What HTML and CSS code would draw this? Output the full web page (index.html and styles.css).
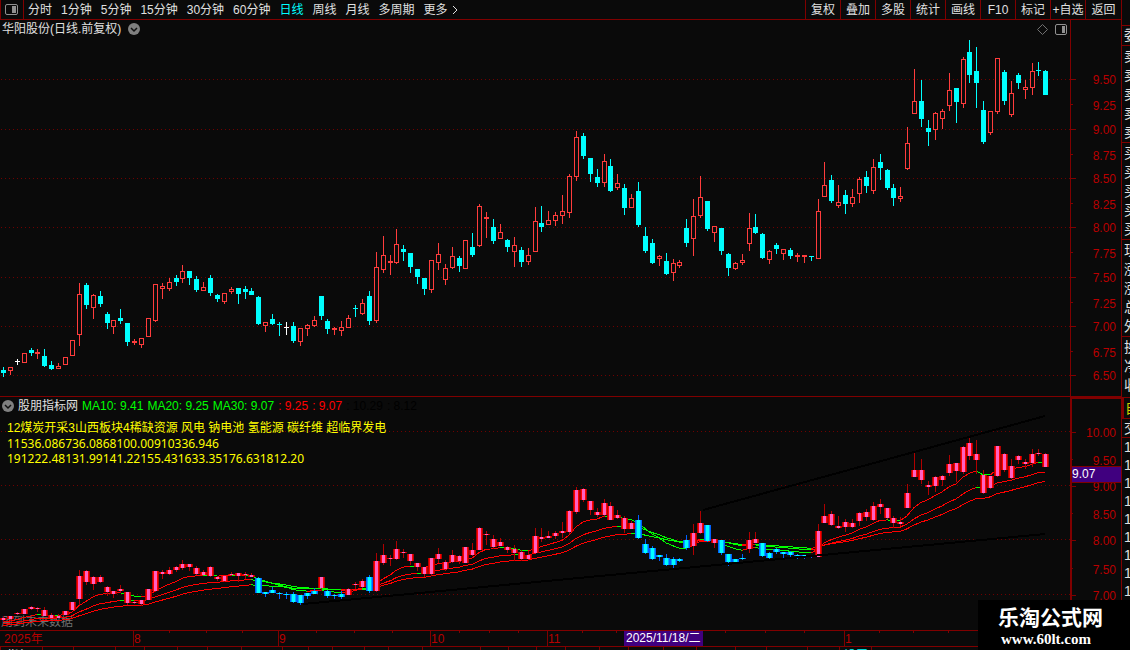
FILE: index.html
```html
<!DOCTYPE html>
<html lang="zh-CN">
<head>
    <meta charset="UTF-8">
    <meta name="viewport" content="width=device-width, initial-scale=1.0">
    <title>华阳股份 日线</title>
    <link rel="stylesheet" href="styles.css">
</head>
<body>
    <div class="terminal">
        <main class="workspace">
            <header class="toolbar">
                <button type="button" class="panel-toggle" aria-label="侧栏">
                    <svg width="13" height="12" viewBox="0 0 13 12">
                        <rect x="0.5" y="0.5" width="12" height="10" rx="1.5" fill="none" stroke="#909090"/>
                        <rect x="7" y="2" width="4" height="7" fill="#909090"/>
                    </svg>
                </button>
                <nav class="periods">
                    <button type="button">分时</button>
                    <button type="button">1分钟</button>
                    <button type="button">5分钟</button>
                    <button type="button">15分钟</button>
                    <button type="button">30分钟</button>
                    <button type="button">60分钟</button>
                    <button type="button" class="active">日线</button>
                    <button type="button">周线</button>
                    <button type="button">月线</button>
                    <button type="button">多周期</button>
                    <button type="button" class="more">更多
                        <svg width="6" height="10" viewBox="0 0 6 10"><path d="M1 1L5 5L1 9" fill="none" stroke="#e0e0e0"/></svg>
                    </button>
                </nav>
                <div class="tools">
                    <button type="button">复权</button>
                    <button type="button">叠加</button>
                    <button type="button">多股</button>
                    <button type="button">统计</button>
                    <button type="button">画线</button>
                    <button type="button">F10</button>
                    <button type="button">标记</button>
                    <button type="button">+自选</button>
                    <button type="button">返回</button>
                </div>
            </header>

            <section class="panel price-panel">
                <div class="plot">
                    <svg id="priceChart" class="chart"></svg>
                    <div class="plot-head title">
                        <span>华阳股份(日线.前复权)</span>
                        <svg width="12" height="12" viewBox="0 0 12 12">
                            <circle cx="6" cy="6" r="6" fill="#808080"/>
                            <path d="M3 5L6 8L9 5" fill="none" stroke="#111" stroke-width="1.5"/>
                        </svg>
                        <div class="plot-icons">
                            <svg width="11" height="11" viewBox="0 0 11 11"><path d="M5.5 0.5L10.5 5.5L5.5 10.5L0.5 5.5Z" fill="none" stroke="#707070"/></svg>
                            <svg width="12" height="11" viewBox="0 0 12 11">
                                <rect x="0.5" y="0.5" width="11" height="10" rx="1.5" fill="none" stroke="#909090"/>
                                <rect x="7" y="2" width="3" height="7" fill="#909090"/>
                            </svg>
                        </div>
                    </div>
                </div>
                <svg id="priceAxis" class="axis"></svg>
            </section>

            <section class="panel indicator-panel">
                <div class="plot">
                    <svg id="indicatorChart" class="chart"></svg>
                    <div class="plot-head">
                        <svg width="12" height="12" viewBox="0 0 12 12">
                            <circle cx="6" cy="6" r="6" fill="#808080"/>
                            <path d="M3 5L6 8L9 5" fill="none" stroke="#111" stroke-width="1.5"/>
                        </svg>
                        <span>股朋指标网</span>
                        <span class="up">MA10: 9.41</span>
                        <span class="up">MA20: 9.25</span>
                        <span class="up">MA30: 9.07</span>
                        <span class="alert">: 9.25</span>
                        <span class="alert">: 9.07</span>
                        <span class="dim">: 10.29</span>
                        <span class="dim">: 8.12</span>
                    </div>
                    <div class="notes">
                        <p>12煤炭开采3山西板块4稀缺资源 风电 钠电池 氢能源 碳纤维 超临界发电</p>
                        <p class="figures">11536.086736.0868100.00910336.946</p>
                        <p class="figures">191222.48131.99141.22155.431633.35176.631812.20</p>
                    </div>
                </div>
                <svg id="indicatorAxis" class="axis"></svg>
            </section>

            <svg id="timeAxis" class="time-axis"></svg>
            <svg id="tabStrip" class="tab-strip"></svg>
        </main>

        <aside class="quotes">
            <div class="group first"><span>委</span></div>
            <div class="group"><span>卖</span><span>卖</span><span>卖</span><span>卖</span><span>卖</span></div>
            <div class="group"><span>买</span><span>买</span><span>买</span><span>买</span><span>买</span></div>
            <div class="group"><span>现</span><span>涨</span><span>涨</span><span>总</span><span>外</span></div>
            <div class="group"><span>换</span><span>净</span><span>收</span></div>
            <div class="group tab"><span>自</span></div>
            <div class="group ticks-head"><span>交</span></div>
            <div class="group ticks"><span>1</span><span>1</span><span>1</span><span>1</span><span>1</span><span>1</span><span>1</span><span>1</span><span>1</span></div>
        </aside>

        <div class="brand">
            <strong>乐淘公式网</strong>
            <span>www.60lt.com</span>
        </div>
    </div>

    <script src="chart.js"></script>
</body>
</html>
```
FILE: styles.css
```css
* {
    margin: 0;
    padding: 0;
    box-sizing: border-box;
}

body {
    background: #0a0a0a;
    color: #e0e0e0;
    font-family: "Liberation Sans", "Noto Sans CJK SC", sans-serif;
    font-size: 12px;
    line-height: 16px;
    overflow: hidden;
}

button {
    background: none;
    border: none;
    color: inherit;
    font: inherit;
    white-space: nowrap;
    cursor: pointer;
}

svg {
    display: block;
    flex: none;
}

.terminal {
    position: relative;
    display: grid;
    grid-template-columns: minmax(0, 1fr) 9px;
    height: 100vh;
    overflow: hidden;
}

.workspace {
    display: flex;
    flex-direction: column;
    min-width: 0;
}

/* toolbar */
.toolbar {
    display: flex;
    height: 20px;
    flex: none;
    border-bottom: 1px solid #800000;
    border-left: 1px solid #800000;
}

.panel-toggle {
    display: flex;
    align-items: center;
    padding: 0 5px 0 4px;
    border-right: 1px solid #800000;
}

.periods {
    display: flex;
    gap: 9px;
    padding-left: 4px;
    flex: 1;
}

.periods .active {
    color: #00ffff;
}

.more {
    display: flex;
    align-items: center;
    gap: 4px;
}

.tools {
    display: grid;
    grid-template-columns: repeat(8, 35px) 36px;
}

.tools button {
    border-left: 1px solid #800000;
}

/* chart panels */
.panel {
    display: grid;
    grid-template-columns: minmax(0, 1fr) 51px;
    flex: none;
}

.plot {
    position: relative;
}

.chart,
.axis,
.time-axis,
.tab-strip {
    width: 100%;
    overflow: hidden;
    shape-rendering: crispEdges;
}

.price-panel .chart,
.price-panel .axis {
    height: 376px;
}

.price-panel .axis {
    border-left: 1px solid #800000;
}

.indicator-panel {
    border-top: 1px solid #800000;
}

.indicator-panel .chart,
.indicator-panel .axis {
    height: 233px;
}

.indicator-panel .axis {
    border: 2px solid #800000;
    border-width: 2px 0 0 2px;
}

.axis text,
.time-axis text {
    fill: #b80000;
}

.axis text {
    text-anchor: end;
}

.axis .cursor-value,
.time-axis .cursor-value {
    fill: #ffffff;
}

.axis .cursor-value {
    text-anchor: start;
}

.plot-head {
    position: absolute;
    top: 0;
    left: 0;
    right: 0;
    display: flex;
    align-items: center;
    gap: 4px;
    padding: 1px 3px 1px 2px;
    white-space: nowrap;
}

.plot-head.title {
    gap: 7px;
}

.plot-icons {
    display: flex;
    gap: 7px;
    margin-left: auto;
}

.up {
    color: #00ff00;
}

.alert {
    color: #ff0000;
}

.dim {
    color: #000000;
}

.notes {
    position: absolute;
    top: 24px;
    left: 7px;
    color: #ffff00;
    line-height: 15px;
    white-space: nowrap;
}

.figures {
    font-family: "Noto Sans", sans-serif;
}

.time-axis {
    height: 17px;
    border: 1px solid #800000;
    border-width: 1px 0;
}

.tab-strip {
    height: 20px;
}

/* clipped quote column */
.quotes {
    border-left: 1px solid #800000;
    padding-top: 25px;
    overflow: hidden;
    font-size: 14px;
    line-height: 19px;
}

.group {
    display: flex;
    flex-direction: column;
    width: 32px;
    padding: 1px 0 0 2px;
    border-top: 1px solid #800000;
}

.group.first {
    padding-top: 0;
}

.group:nth-child(5) {
    padding-bottom: 2px;
}

.group.tab {
    color: #d0d000;
    border-left: 2px solid #800000;
    padding-left: 1px;
}

.group.ticks-head {
    padding-top: 0;
    line-height: 18px;
}

.group.ticks {
    padding-top: 0;
    line-height: 18px;
}

.brand {
    position: absolute;
    right: 0;
    bottom: 0;
    width: 152px;
    height: 50px;
    padding: 6px 0 0 20px;
    background: #000;
    color: #fff;
}

.brand strong,
.brand span {
    display: block;
}

.brand strong {
    font-size: 21px;
    line-height: 24px;
}

.brand span {
    padding-left: 3px;
    font-family: "Liberation Serif", serif;
    font-size: 15px;
    font-weight: bold;
    line-height: 18px;
}
```
FILE: chart.js
```js
// high, body top, body bottom, low, kind (u = up, d = down, n = unchanged)
const bars = `
367,370,373,377,d 367,367,371,375,u 359,361,362,365,n 353,353,363,363,u 348,350,353,356,d
349,352,354,359,u 349,356,366,367,d 361,365,369,370,d 363,366,369,369,u 357,357,365,365,u
340,340,356,356,u 283,294,335,346,u 283,285,305,309,d 294,295,308,319,u 291,296,304,307,d
312,314,323,329,d 320,320,327,334,u 309,318,321,324,d 323,323,342,346,d 339,341,343,345,u
338,338,345,348,u 318,318,337,337,u 284,284,321,322,u 283,286,289,299,u 278,282,289,291,u
275,278,282,286,d 265,271,279,283,u 271,271,278,285,d 276,279,290,292,d 282,287,291,291,u
275,278,293,296,d 294,295,299,302,d 293,293,302,304,u 287,289,292,294,u 288,288,294,304,d
286,289,292,299,d 288,291,295,295,d 296,297,324,325,d 322,322,326,332,u 314,319,324,325,d
322,324,325,336,d 322,327,328,335,n 322,326,341,343,d 328,328,342,346,u 324,325,329,336,u
316,320,326,327,u 296,296,316,320,d 319,321,329,334,d 327,328,330,335,u 321,327,331,336,u
315,318,328,328,u 305,308,309,317,d 299,303,314,315,u 291,296,321,325,d 252,267,321,323,u
236,255,270,273,u 255,261,263,275,u 229,244,263,264,u 245,249,252,261,d 253,253,267,273,d
269,269,277,284,d 278,278,289,295,d 260,260,290,293,u 243,254,263,270,u 264,268,280,285,u
247,256,268,269,u 256,258,266,272,d 240,240,269,269,u 233,247,255,257,d 204,206,246,247,u
212,217,219,238,u 219,227,241,244,d 224,232,239,239,u 239,240,247,252,d 237,245,252,267,u
247,250,262,267,d 248,255,262,265,u 207,221,252,252,u 206,223,227,232,d 211,220,225,225,u
212,215,221,226,u 195,211,216,224,u 174,176,213,218,u 131,137,177,181,u 133,136,156,159,d
158,158,174,182,d 169,177,183,187,d 154,161,183,187,u 159,166,191,192,d 174,183,188,190,u
184,188,208,215,d 194,198,208,208,u 182,191,225,227,d 227,236,251,253,d 239,243,263,264,d
255,256,259,266,u 253,261,274,275,d 259,263,273,281,u 260,262,266,268,u 219,228,243,247,d
199,216,239,256,u 176,197,216,218,u 201,201,229,231,d 226,226,233,242,u 228,228,251,255,d
253,254,268,276,d 262,263,269,270,u 254,260,263,265,u 213,228,244,251,u 214,227,233,234,d
233,234,258,259,d 250,251,260,264,u 243,245,249,254,d 249,249,254,260,u 248,250,256,259,d
253,255,257,262,u 255,255,257,263,u 256,256,257,261,d 199,211,259,259,u 162,185,197,197,u
175,180,201,203,d 185,202,206,208,u 190,195,204,214,d 189,197,204,207,u 177,179,194,203,u
171,177,186,193,d 159,167,191,194,u 154,162,168,180,d 169,170,188,190,d 184,188,198,206,d
187,196,199,202,u 127,143,169,170,u 69,101,114,114,u 80,101,119,127,d 120,128,132,146,d
112,113,130,140,u 109,111,119,129,u 73,90,106,111,u 88,88,102,123,d 57,59,104,108,u
40,52,75,83,d 47,71,83,108,d 101,110,142,144,d 111,111,133,135,u 58,58,112,114,u
70,72,101,105,d 81,93,115,117,u 73,75,83,89,d 80,87,90,99,u 63,71,88,95,u
62,70,71,76,d 70,71,95,95,d`.trim().split(/\s+/).map((row, i) => {
    const [high, top, bottom, low, kind] = row.split(',');
    return { x: barX(i), high: +high, top: +top, bottom: +bottom, low: +low, kind };
});

// bars drawn in the weak (blue) colours in the indicator, as index ranges
const weakRanges = [[37, 45], [47, 49], [53, 53], [92, 99], [102, 102], [104, 107], [110, 117]];

function barX(i) {
    return 3 + 7 * i - Math.floor((3 * i + 16) / 31);
}

function rect(x, y, w, h, fill) {
    return `<rect x="${x}" y="${y}" width="${w}" height="${h}" fill="${fill}"/>`;
}

function gridLines(rows) {
    return rows.map(y => `<line x1="1" x2="100%" y1="${y + 0.5}" y2="${y + 0.5}" stroke="#700000" stroke-dasharray="1 3"/>`).join('');
}

function draw(id, offset, content) {
    document.getElementById(id).innerHTML = `<g transform="translate(0 ${-offset})">${content}</g>`;
}

// price chart
function priceBar(b) {
    const color = { u: '#ff3c3c', d: '#00ffff', n: '#ffffff' }[b.kind];
    const height = b.bottom - b.top;
    let out = rect(b.x, b.high, 1, b.low - b.high, color) + rect(b.x - 2, b.top, 5, height, color);
    if (b.kind === 'u' && height > 2) {
        out += rect(b.x - 1, b.top + 1, 3, height - 2, '#0a0a0a');
    }
    return out;
}

draw('priceChart', 20, gridLines([79, 129, 178, 227, 277, 326, 375]) + bars.map(priceBar).join(''));

// indicator chart, same bars on the smaller scale
const toIndicator = y => Math.round(459 + (y - 79) * 0.55);

function indicatorBar(b, i) {
    const weak = weakRanges.some(([from, to]) => i >= from && i <= to);
    const [edge, mid, core] = weak ? ['#0060ff', '#00a8ff', '#00ffff'] : ['#b00000', '#ff0000', '#ff60c0'];
    const top = toIndicator(b.top);
    const height = Math.max(1, toIndicator(b.bottom) - top);
    const high = toIndicator(b.high);
    return rect(b.x, high, 1, toIndicator(b.low) - high, edge)
        + rect(b.x - 3, top, 7, height, edge)
        + rect(b.x - 2, top, 5, height, mid)
        + rect(b.x - 1, top, 3, height, core);
}

// exponential average over n bars, red while rising and green while falling
function average(n, start) {
    let value = start;
    const points = bars.map(b => {
        const close = b.kind === 'd' ? b.bottom : b.top;
        value += (close - value) * 2 / (n + 1);
        return 459 + (value - 79) * 0.55;
    });
    return points.slice(1).map((y, i) => {
        const color = y <= points[i] ? '#ff0000' : '#00ff00';
        return `<line x1="${bars[i].x}" y1="${points[i]}" x2="${bars[i + 1].x}" y2="${y}" stroke="${color}"/>`;
    }).join('');
}

draw('indicatorChart', 398,
    gridLines([432, 486, 540, 595])
    + '<text x="1" y="627" fill="#707070">用到未来数据</text>'
    + average(30, 384) + average(20, 381) + average(10, 378)
    + bars.map(indicatorBar).join('')
    + '<path d="M703 511L1045 417M303 605L1045 535" stroke="#000" stroke-width="2"/>');

// value axes
function axisLabels(labels, x) {
    return labels.map(([text, y]) => `<text x="${x}" y="${y + 4}">${text}</text>`).join('');
}

function axisTicks(rows, length) {
    return rows.map(y => rect(0, y, length, 1, '#800000')).join('');
}

draw('priceAxis', 20,
    axisTicks([79, 129, 178, 227, 277, 326, 375], 5)
    + axisTicks([104, 154, 203, 252, 302, 351], 2)
    + axisLabels([['9.50', 80], ['9.25', 106], ['9.00', 130], ['8.75', 156], ['8.50', 179], ['8.25', 205],
        ['8.00', 228], ['7.75', 254], ['7.50', 278], ['7.25', 304], ['7.00', 327], ['6.75', 353], ['6.50', 376]], 45));

draw('indicatorAxis', 399,
    axisTicks([432, 486, 540, 595], 4)
    + axisTicks([459, 513, 568], 1)
    + axisLabels([['10.00', 433], ['9.50', 461], ['9.00', 487], ['8.50', 515], ['8.00', 541], ['7.50', 570], ['7.00', 596]], 44)
    + rect(0, 466, 49, 17, '#800000') + rect(0, 467, 49, 15, '#40007f')
    + '<text class="cursor-value" x="0" y="478">9.07</text>');

// time axis
const months = [['8', 133], ['9', 278], ['10', 430], ['11', 547], ['1', 844]];
const weeks = [169, 206, 242, 316, 354, 392, 459, 489, 518, 582, 616, 725, 765, 804, 879, 913, 948];

draw('timeAxis', 631,
    '<text x="4" y="643">2025年</text>'
    + months.map(([text, x]) => rect(x, 631, 1, 15, '#800000') + `<text x="${x + 1}" y="643">${text}</text>`).join('')
    + weeks.map(x => rect(x, 631, 1, 2, '#800000')).join('')
    + rect(624, 631, 79, 15, '#40007f')
    + '<text class="cursor-value" x="626" y="642">2025/11/18/二</text>');

const tabs = [0, 42, 73, 115, 144, 177, 207, 241, 282, 308, 332, 364, 388, 422, 480, 508, 536, 565, 599, 628, 663, 696, 735, 766, 807, 839, 871];

draw('tabStrip', 647,
    tabs.map(x => rect(x, 647, 1, 20, '#800000')).join('')
    + '<text x="7" y="660" fill="#e0e0e0">指标</text><text x="844" y="660" fill="#00ffff">设置</text>');
```
